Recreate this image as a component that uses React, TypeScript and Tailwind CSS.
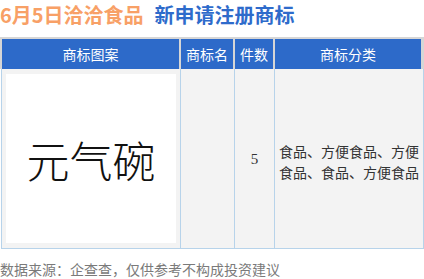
const cjk = "font-['Noto_Sans_CJK_SC',sans-serif]";

export default function App() {
  return (
    <div className={`w-[424px] h-[279px] bg-white overflow-hidden ${cjk}`}>
      <div className="flex h-[30px] items-center gap-[11px] text-[20px] font-bold leading-none">
        <span className="text-[#f8a066]">6月5日洽洽食品</span>
        <span className="text-[#2e6bcb]">新申请注册商标</span>
      </div>

      <div className="mt-[7px] flex gap-[2px] bg-[#d6d6d6] pl-[2px] pr-[3px] pt-[2px] text-[14px] text-white">
        <div className="flex h-[30px] w-[177px] items-center justify-center bg-[#2d6ac9]">商标图案</div>
        <div className="flex h-[30px] w-[52px] items-center justify-center bg-[#2d6ac9]">商标名</div>
        <div className="flex h-[30px] w-[38px] items-center justify-center bg-[#2d6ac9]">件数</div>
        <div className="flex h-[30px] w-[146px] items-center justify-center bg-[#2d6ac9]">商标分类</div>
      </div>

      <div className="ml-[1px] flex h-[180px] w-[423px] border-x border-b border-[#b7d3ea] bg-[#f3f3f3]">
        <div className="w-[179px] border-r border-[#b7d3ea] px-[4px] py-[5px]">
          <div className="flex h-full items-center justify-center bg-white pt-[1px] text-[43px] font-light text-[#111]">
            元气碗
          </div>
        </div>
        <div className="w-[54px] border-r border-[#b7d3ea]" />
        <div className="flex w-[40px] items-center justify-center border-r border-[#b7d3ea] pt-[1px] font-['Liberation_Serif',serif] text-[15px] text-[#333]">
          5
        </div>
        <div className="flex flex-1 items-center pl-[4px] pt-[6px] text-[14px] leading-[21px] text-[#333]">
          食品、方便食品、方便食品、食品、方便食品
        </div>
      </div>

      <div className="mt-[10px] text-[14px] leading-[20px] text-[#7a7a7a]">
        数据来源：企查查，仅供参考不构成投资建议
      </div>
    </div>
  );
}
